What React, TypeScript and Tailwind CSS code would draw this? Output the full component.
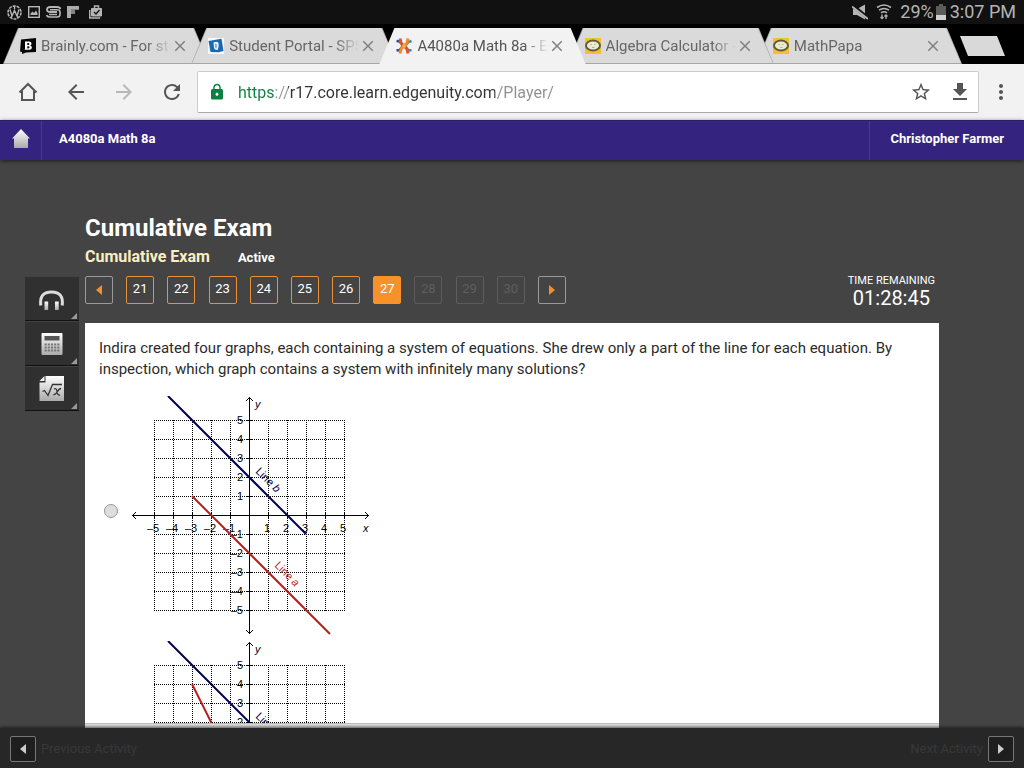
import React, { useState } from 'react';
import {
  MdArrowBack,
  MdArrowForward,
  MdClose,
  MdFileDownload,
  MdLock,
  MdMoreVert,
  MdRefresh,
  MdStarBorder,
} from 'react-icons/md';

type FaviconName = 'brainly' | 'portal' | 'edgenuity' | 'mathpapa';

interface BrowserTab {
  title: string;
  icon: FaviconName;
  layer: string;
}

const TABS: BrowserTab[] = [
  { title: 'Brainly.com - For students', icon: 'brainly', layer: 'z-10' },
  { title: 'Student Portal - SPS', icon: 'portal', layer: 'z-20' },
  { title: 'A4080a Math 8a - Edgenuity', icon: 'edgenuity', layer: 'z-30' },
  { title: 'Algebra Calculator - MathPapa', icon: 'mathpapa', layer: 'z-20' },
  { title: 'MathPapa', icon: 'mathpapa', layer: 'z-10' },
];

const ACTIVE_TAB = 2;

function Favicon({ name }: { name: FaviconName }) {
  switch (name) {
    case 'brainly':
      return (
        <svg className="size-4 shrink-0" viewBox="0 0 16 16">
          <path d="M1 1.500L16 0v14l-10 .5L2 16v-2L0 13.500z" fill="#050505" />
          <path
            d="M5 3.500h4.500q2 .3 2 2 0 1.400-1.200 1.900 1.700.6 1.600 2.300-.2 2-2.500 2.100H4.500l.5-1V4.500zM7.300 5v2h1q1-.1 1-1t-1-1zm0 3.200v2.200h1q1.200-.1 1.200-1.100t-1.200-1.100z"
            fill="#fff"
            fillRule="evenodd"
          />
        </svg>
      );
    case 'portal':
      return (
        <svg className="size-4 shrink-0" viewBox="0 0 16 16">
          <rect width="16" height="16" fill="#f4f8fc" />
          <path d="M.5 3L13.500.8 15.500 13l-5 1.300L2.500 14z" fill="#1a68b0" />
          <path d="M5.500 4.500q3.500-1.500 5 .5.800 3-.8 7-2.700.5-3.700-2z" fill="#e8f2fb" />
          <path d="M7.500 5.500q1 0 1 2l-.2 2.800-.8-.8z" fill="#1a68b0" />
        </svg>
      );
    case 'edgenuity':
      return (
        <svg className="size-4 shrink-0" viewBox="0 0 16 16" fill="none" strokeWidth="3">
          <path d="M.5 3l3.500.5L7 8l-3.500 4L.5 12.500" stroke="#344d91" strokeWidth="2.500" />
          <path d="M15.500 3l-3 1L9 8l3 4 3.500.5" stroke="#2e8ac8" strokeWidth="2.500" />
          <path d="M4 .5L5 5l6 6 1 4.500" stroke="#dc5430" />
          <path d="M12 .5L11 5l-6 6-1 4.500" stroke="#ee8a2b" />
          <circle cx="8" cy="8" r="2" fill="#f3ab3b" />
        </svg>
      );
    default:
      return (
        <svg className="size-4 shrink-0" viewBox="0 0 16 16">
          <rect width="16" height="16" fill="#f2c12e" />
          <ellipse cx="8" cy="7.500" rx="7" ry="5" fill="#ecebd2" stroke="#5d5b3a" strokeWidth="2" />
          <path d="M5.500 6.500h1.500M9 6.500h1.500M7 9.500h2.500" stroke="#b5b294" />
        </svg>
      );
  }
}

function StatusBar() {
  return (
    <div className="flex h-6 shrink-0 items-center justify-between bg-[#111] pr-2 pl-[7px] text-[#b5b5b5]">
      <div className="flex items-center gap-1.5">
        <svg className="size-[15px]" viewBox="0 0 15 15" fill="none" stroke="currentColor">
          <circle cx="7.500" cy="7.500" r="6.500" strokeWidth="1.600" strokeDasharray="3 1" />
          <path d="M3 4.500l2 6.500 2.500-5.500L10 11l2-6.500M7.500 1v3M4 13l1-2M11 13l-1-2" strokeWidth="1.400" />
        </svg>
        <svg className="size-3" viewBox="0 0 12 12">
          <rect x=".7" y=".7" width="10.600" height="10.600" fill="none" stroke="currentColor" strokeWidth="1.400" />
          <path d="M2.500 9V7.500l2-2 1.500 1.500 2-2.500L9.500 7v2z" fill="currentColor" />
        </svg>
        <svg className="h-3 w-[15px]" viewBox="0 0 15 12" fill="none" stroke="currentColor">
          <path d="M14.500 3Q14 1 11 1H4Q1 1 1 3.500T4 6h7" strokeWidth="1.800" />
          <path d="M.5 9q.5 2 3.500 2h7q3 0 3-2.500V6q0-2.200-3-2.200H4M3 8.500h8" strokeWidth="1.600" />
        </svg>
        <svg className="size-3" viewBox="0 0 12 12" fill="currentColor">
          <path d="M0 0h12v4H8v4H4v4H0z" opacity=".7" />
          <path d="M0 0h4v12H0zM4 0h8v3H4z" opacity=".8" />
        </svg>
        <svg className="ml-1 h-[14px] w-[13px]" viewBox="0 0 13 14" fill="none" stroke="currentColor">
          <path d="M2.500 3.500h10V11h-10z" fill="currentColor" />
          <path d="M5.500 3.500V1h4v2.500M.7 5v8h10.500" strokeWidth="1.400" />
          <path d="M5 7l2 2 3.500-4" stroke="#111" strokeWidth="1.300" />
        </svg>
      </div>
      <div className="flex items-center gap-0.5 text-lg/6">
        <svg className="mr-1.5 h-4 w-4" viewBox="0 0 16 16" fill="currentColor">
          <path d="M1 5h4l8-4.500v15L5 11H1z" />
          <path d="M0 1l16 13" stroke="#111" strokeWidth="3.500" />
          <path d="M0 2.500l16 12.500" stroke="currentColor" strokeWidth="1.800" />
        </svg>
        <svg className="mr-1.5 h-4 w-4" viewBox="0 0 16 16" fill="none" stroke="currentColor" strokeWidth="1.600">
          <path d="M1 3.500q7-5 14 0M3 6.200q5-3.500 10 0M5 8.800q3-2 6 0" />
          <path d="M6 10.500v4M4.500 13L6 14.500 7.500 13M10 15v-4M8.500 12.500L10 11l1.500 1.500" strokeWidth="1.300" />
        </svg>
        <span>29%</span>
        <svg className="mr-0.5 h-4 w-2.5" viewBox="0 0 10 16">
          <path d="M3 0h4v2h3v14H0V2h3z" fill="#5c5c5c" />
          <path d="M0 11h10v5H0z" fill="#d0d0d0" />
        </svg>
        <span>3:07 PM</span>
      </div>
    </div>
  );
}

function TabStrip() {
  return (
    <div className="flex h-10 shrink-0 items-end bg-black pr-[19px] pl-[3px]">
      <div className="-mr-0.5 flex min-w-0 flex-1">
        {TABS.map((tab, index) => {
          const active = index === ACTIVE_TAB;
          return (
            <div
              key={`${tab.title}-${index}`}
              className={`relative -mr-[18px] h-9 min-w-0 flex-1 last:mr-0 [clip-path:polygon(15px_0,calc(100%-15px)_0,100%_100%,0_100%)] ${
                active ? 'bg-[#f2f2f2]' : 'bg-[#a6a6a6]'
              } ${tab.layer}`}>
              <div
                className={`flex h-full items-center pr-5 pl-[17px] [clip-path:polygon(16px_0,calc(100%-16px)_0,calc(100%-1px)_calc(100%-1px),1px_calc(100%-1px))] ${
                  active ? 'bg-[#f2f2f2]' : 'bg-[#dadada]'
                }`}>
                <Favicon name={tab.icon} />
                <button
                  type="button"
                  className={`ml-[5px] min-w-0 flex-1 overflow-hidden text-left text-[15px]/5 whitespace-nowrap [mask-image:linear-gradient(to_right,black_calc(100%-24px),transparent)] ${
                    active ? 'text-[#555]' : 'text-[#666]'
                  }`}>
                  {tab.title}
                </button>
                <button type="button" aria-label={`Close ${tab.title}`} className="text-[#808080]">
                  <MdClose className="size-[18px]" />
                </button>
              </div>
            </div>
          );
        })}
      </div>
      <button
        type="button"
        aria-label="New tab"
        className="mb-2 h-5 w-[45px] bg-[#d9d9d9] [clip-path:polygon(0_0,calc(100%-8px)_0,100%_100%,8px_100%)]"
      />
    </div>
  );
}

function AddressBar() {
  const [url, setUrl] = useState('https://r17.core.learn.edgenuity.com/Player/');

  return (
    <div className="flex h-14 shrink-0 items-center bg-[#f2f2f2] pr-[11px] pl-4 text-[#555]">
      <div className="flex gap-6 pr-[13px]">
        <button type="button" aria-label="Home">
          <svg className="size-6" viewBox="0 0 24 24" fill="none" stroke="currentColor" strokeWidth="2">
            <path d="M3.500 12.500L12 4l8.500 8.500M6 11v9h12v-9" />
          </svg>
        </button>
        <button type="button" aria-label="Back">
          <MdArrowBack className="size-6" />
        </button>
        <button type="button" aria-label="Forward" className="text-[#b8b8b8]">
          <MdArrowForward className="size-6" />
        </button>
        <button type="button" aria-label="Reload">
          <MdRefresh className="size-6" />
        </button>
      </div>
      <div className="flex h-[42px] flex-1 items-center rounded-xs border border-[#ccc] border-b-[#aaa] bg-white pr-1.5 pl-2.5">
        <MdLock className="size-[18px] text-[#0b8043]" />
        <input
          type="text"
          aria-label="Address"
          value={url}
          spellCheck={false}
          onChange={e => setUrl(e.target.value)}
          className="ml-3 h-8 min-w-0 flex-1 bg-[linear-gradient(to_right,#0b8043_37px,#999_37px,#999_50px,#333_50px,#333_257px,#8f8f8f_257px)] bg-clip-text text-base text-transparent outline-none"
        />
        <button type="button" aria-label="Bookmark this page">
          <MdStarBorder className="size-[22px]" />
        </button>
        <button type="button" aria-label="Download page" className="ml-4">
          <MdFileDownload className="size-6" />
        </button>
      </div>
      <button type="button" aria-label="Menu" className="ml-2.5">
        <MdMoreVert className="size-6" />
      </button>
    </div>
  );
}

function CourseHeader() {
  return (
    <header className="z-10 flex h-10 shrink-0 items-stretch border-t border-[#2a1c69] bg-[#35247f] text-[13px]/4 font-bold text-white shadow-[0_1px_4px_rgba(0,0,0,0.6)]">
      <a href="#home" aria-label="Home" className="flex w-[42px] items-center justify-center border-r border-[#4a3b91] pb-1">
        <svg className="h-5 w-[18px]" viewBox="0 0 18 20">
          <defs>
            <linearGradient id="metal" x2="0" y2="1">
              <stop stopColor="#fff" />
              <stop offset="1" stopColor="#aaa" />
            </linearGradient>
          </defs>
          <path d="M9 0l9 9.500h-2V19H2V9.500H0z" fill="url(#metal)" />
        </svg>
      </a>
      <a href="#course" className="pt-2.5 pl-[17px]">
        A4080a Math 8a
      </a>
      <a href="#account" className="ml-auto border-l border-[#4a3b91] px-5 pt-2.5">
        Christopher Farmer
      </a>
    </header>
  );
}

function ToolRail() {
  const tools = [
    {
      label: 'Read aloud',
      art: (
        <svg className="h-6 w-7" viewBox="0 0 28 24">
          <path d="M2.800 18.500Q1 5 13.500 5t10.700 13.500" fill="none" stroke="#ddd" strokeWidth="3" />
          <path d="M6.500 14.500h3.700V23H6.500zM17 14.500h3.700V23H17z" fill="url(#metal)" />
        </svg>
      ),
    },
    {
      label: 'Calculator',
      art: (
        <svg className="h-6 w-7" viewBox="0 0 28 24">
          <rect x="3.500" y="1" width="21" height="22" rx="1" fill="url(#metal)" />
          <path d="M6.500 4h15v4.500h-15z" fill="#555" />
          <path
            d="M6.500 12.500h15M6.500 15.500h15M6.500 18.500h15"
            stroke="#777"
            strokeWidth="2"
            strokeDasharray="2.200 1"
          />
        </svg>
      ),
    },
    {
      label: 'Formulas',
      art: (
        <svg className="h-[26px] w-7" viewBox="0 0 28 26">
          <path d="M7.500 0H26v25H1.500V6.500h6z" fill="url(#metal)" />
          <path d="M6.500 0v5H1.500z" fill="#f2f2f2" />
          <path d="M4.500 15.500l2-1 3.500 5 4.500-11H24" fill="none" stroke="#333" strokeWidth="1.300" />
          <path d="M16 13q2.500-1.500 3 2.500t3 3.500M23 12.500q-2 0-3.500 3T15.500 19" fill="none" stroke="#333" strokeWidth="1.300" />
        </svg>
      ),
    },
  ];

  return (
    <div className="mr-1.5 w-[54px] shrink-0">
      {tools.map(tool => (
        <button
          key={tool.label}
          type="button"
          aria-label={tool.label}
          className="relative flex h-[45px] w-full items-center justify-center border-t border-b border-t-[#424242] border-b-[#111] bg-[#303030]">
          {tool.art}
          <svg className="absolute right-0.5 bottom-px size-1.5" viewBox="0 0 6 6">
            <path d="M6 0v6H0z" fill="#999" />
          </svg>
        </button>
      ))}
    </div>
  );
}

function QuestionNav({ current, onSelect }: { current: number; onSelect: (n: number) => void }) {
  const questions = [21, 22, 23, 24, 25, 26, 27, 28, 29, 30];
  const arrow = 'flex size-7 items-center justify-center rounded-xs border border-[#999]';

  return (
    <nav aria-label="Questions" className="flex w-[481px] justify-between text-[13px]/4">
      <button type="button" aria-label="Previous question" className={arrow}>
        <svg className="h-2.5 w-1.5" viewBox="0 0 6 10">
          <path d="M6 0v10L0 5z" fill="#f0902e" />
        </svg>
      </button>
      {questions.map(n => {
        let look = 'border-[#e8913a] text-white';
        if (n === current) look = 'border-[#f7922b] bg-[#f7922b] text-white';
        if (n > 27) look = 'border-[#5d5d5d] text-[#5f5f5f]';
        return (
          <button
            key={n}
            type="button"
            disabled={n > 27}
            onClick={() => onSelect(n)}
            className={`size-7 rounded-xs border pb-0.5 ${look}`}>
            {n}
          </button>
        );
      })}
      <button type="button" aria-label="Next question" className={arrow}>
        <svg className="h-2.5 w-1.5" viewBox="0 0 6 10">
          <path d="M0 0v10l6-5z" fill="#f0902e" />
        </svg>
      </button>
    </nav>
  );
}

// Plot area: the origin sits at (119, 119) and one unit is 19px
const ORIGIN = 119;
const UNIT = 19;
const STEPS = [-5, -4, -3, -2, -1, 0, 1, 2, 3, 4, 5];

interface GraphProps {
  blue: string;
  red: string;
  redLabel: { x: number; y: number; angle: number };
}

function label(n: number) {
  return n < 0 ? `–${-n}` : `${n}`;
}

function Graph({ blue, red, redLabel }: GraphProps) {
  return (
    <svg
      className="block h-[240px] w-[242px] font-[family-name:'Liberation_Sans',sans-serif] text-[11px]"
      viewBox="0 0 242 240"
      fill="none">
      <g stroke="#000" strokeDasharray="1 1" shapeRendering="crispEdges">
        {STEPS.map(n => {
          const p = ORIGIN + n * UNIT + 0.5;
          return <path key={n} d={`M24 ${p}h191M${p} 24v191`} />;
        })}
      </g>
      <g stroke="#000" shapeRendering="crispEdges">
        <path d="M2 119.500h237M119.500 1v237" />
        {STEPS.filter(n => n !== 0).map(n => {
          const p = ORIGIN + n * UNIT + 0.5;
          return <path key={n} d={`M116 ${p}h7M${p} 116v7`} />;
        })}
      </g>
      <path
        d="M6 116l-3.500 3.500L6 123M235 116l3.500 3.500L235 123M116 5l3.500-3.500L123 5M116 234l3.500 3.500L123 234"
        stroke="#000"
      />
      <g fill="#000">
        {STEPS.filter(n => n !== 0).map(n => (
          <g key={n}>
            <text x={ORIGIN + n * UNIT - 1} y="136" textAnchor="middle">
              {label(n)}
            </text>
            <text x="113" y={ORIGIN - n * UNIT + 4} textAnchor="end">
              {label(n)}
            </text>
          </g>
        ))}
        <text x="125" y="12" className="italic">
          y
        </text>
        <text x="233" y="136" className="italic">
          x
        </text>
      </g>
      <path d={blue} stroke="#00004f" strokeWidth="2" />
      <path d={red} stroke="#b51f1f" strokeWidth="2" />
      <text transform="translate(125 76) rotate(45)" fill="#00004f">
        Line <tspan className="italic">b</tspan>
      </text>
      <text
        transform={`translate(${redLabel.x} ${redLabel.y}) rotate(${redLabel.angle})`}
        fill="#b51f1f">
        Line <tspan className="italic">a</tspan>
      </text>
    </svg>
  );
}

const OPTIONS: GraphProps[] = [
  {
    blue: 'M38 0L176 138',
    red: 'M62 100L200 238',
    redLabel: { x: 144, y: 170, angle: 45 },
  },
  {
    blue: 'M38 0L176 138',
    red: 'M62 43L159 237',
    redLabel: { x: 144, y: 188, angle: 63 },
  },
];

function QuestionCard() {
  const [answer, setAnswer] = useState<number | null>(null);

  return (
    <main className="flex min-h-0 flex-1 flex-col bg-white text-[#2b2b2b]">
      <fieldset aria-label="Answer choices" className="min-h-0 flex-1 overflow-hidden px-3.5 pt-[15px]">
        <p className="mb-4 text-[15px]/[21px]">
          Indira created four graphs, each containing a system of equations. She drew only a part of the line for each
          equation. By inspection, which graph contains a system with infinitely many solutions?
        </p>
        {OPTIONS.map((option, index) => (
          <label key={index} className="mb-[5px] flex items-center">
            <input
              type="radio"
              name="answer"
              aria-label={`Graph ${index + 1}`}
              checked={answer === index}
              onChange={() => setAnswer(index)}
              className="mr-3 mb-2.5 ml-[5px] size-3.5 shrink-0 appearance-none rounded-full border border-[#999] bg-[#dedede] checked:bg-[#555]"
            />
            <Graph {...option} />
          </label>
        ))}
      </fieldset>
      <div className="h-[5px] shrink-0 border-t border-[#bbb] bg-linear-to-b from-[#e6e6e6] to-[#bbb]" />
    </main>
  );
}

function ActivityFooter() {
  const box = 'flex size-[26px] items-center justify-center rounded-xs border border-[#777] bg-[#1e1e1e]';

  return (
    <footer className="z-10 flex h-10 shrink-0 items-center justify-between bg-[#272727] px-2.5 pt-0.5 text-[13px]/4 text-[#383838] shadow-[0_-1px_3px_rgba(0,0,0,0.5)]">
      <button type="button" className="flex items-center gap-[5px]">
        <span className={box}>
          <svg className="h-2.5 w-1.5" viewBox="0 0 6 10">
            <path d="M6 0v10L0 5z" fill="#ccc" />
          </svg>
        </span>
        Previous Activity
      </button>
      <button type="button" className="flex items-center gap-[5px]">
        Next Activity
        <span className={box}>
          <svg className="h-2.5 w-1.5" viewBox="0 0 6 10">
            <path d="M0 0v10l6-5z" fill="#ccc" />
          </svg>
        </span>
      </button>
    </footer>
  );
}

export default function App() {
  const [current, setCurrent] = useState(27);

  return (
    <div className="flex h-screen flex-col overflow-hidden bg-[#444] font-[Roboto,sans-serif]">
      <StatusBar />
      <TabStrip />
      <AddressBar />
      <CourseHeader />
      <div className="flex min-h-0 flex-1 flex-col pt-[52px] pr-[85px] pl-[25px]">
        <div className="pl-[60px] text-white">
          <h1 className="text-2xl/8 font-bold">Cumulative Exam</h1>
          <div className="flex items-baseline gap-7 pt-px text-[13px]/6 font-bold">
            <h2 className="text-base/6 text-[#fbeec1]">Cumulative Exam</h2>
            <span>Active</span>
          </div>
        </div>
        <div className="flex min-h-0 flex-1 pt-1.5">
          <ToolRail />
          <div className="flex min-w-0 flex-1 flex-col">
            <div className="flex h-[47px] shrink-0 items-start justify-between pr-1">
              <QuestionNav current={current} onSelect={setCurrent} />
              <div className="text-center text-white">
                <div className="text-[11px]/[10px]">TIME REMAINING</div>
                <div className="text-xl/6">01:28:45</div>
              </div>
            </div>
            <QuestionCard />
          </div>
        </div>
      </div>
      <ActivityFooter />
    </div>
  );
}
